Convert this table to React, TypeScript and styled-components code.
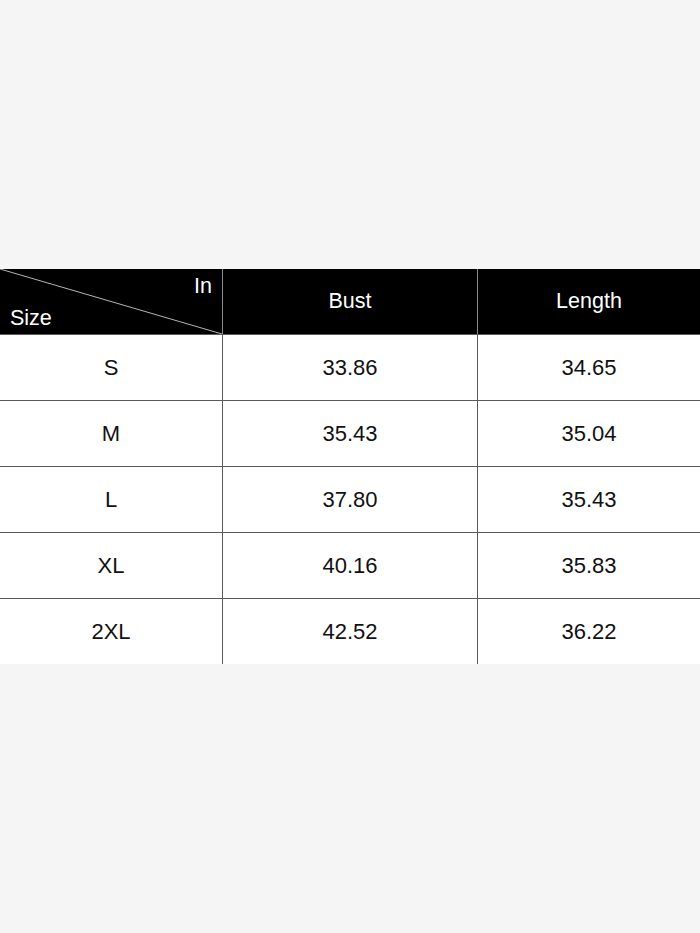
import { Fragment } from 'react';
import styled, { createGlobalStyle } from 'styled-components';

type Row = {
	size: string;
	bust: string;
	length: string;
};

const rows: Row[] = [
	{ size: 'S', bust: '33.86', length: '34.65' },
	{ size: 'M', bust: '35.43', length: '35.04' },
	{ size: 'L', bust: '37.80', length: '35.43' },
	{ size: 'XL', bust: '40.16', length: '35.83' },
	{ size: '2XL', bust: '42.52', length: '36.22' },
];

const GlobalStyle = createGlobalStyle`
	html, body {
		margin: 0;
		padding: 0;
		background: #f5f5f5;
	}
	body {
		font-family: 'Liberation Sans', Arial, sans-serif;
	}
`;

const Page = styled.main`
	width: 700px;
	height: 933px;
	padding-top: 269px;
	box-sizing: border-box;
	background: #f5f5f5;
`;

const Table = styled.div`
	display: grid;
	grid-template-columns: 223px 255px 222px;
	background: #fff;
`;

const HeadCell = styled.div<{ $last?: boolean }>`
	height: 65px;
	background: #000;
	color: #fff;
	font-size: 21.5px;
	display: flex;
	align-items: center;
	justify-content: center;
	border-right: ${(p) => (p.$last ? 'none' : '1px solid #8a8a8a')};
	box-sizing: border-box;
`;

const CornerCell = styled(HeadCell)`
	position: relative;
	flex-direction: column;
	align-items: stretch;
	justify-content: space-between;
	padding: 5px 10px 4px 10px;
`;

const Diagonal = styled.svg`
	position: absolute;
	inset: 0;
	width: 100%;
	height: 100%;
`;

const CornerTop = styled.span`
	align-self: flex-end;
	line-height: 24px;
`;

const CornerBottom = styled.span`
	align-self: flex-start;
	line-height: 24px;
`;

const Cell = styled.div<{ $last?: boolean; $first?: boolean }>`
	height: ${(p) => (p.$first ? '66px' : '66px')};
	border-top: 1px solid #5a5a5a;
	border-right: ${(p) => (p.$last ? 'none' : '1px solid #5a5a5a')};
	box-sizing: border-box;
	display: flex;
	align-items: center;
	justify-content: center;
	font-size: 22px;
	color: #111;
`;

const SizeChart = () => {
	return (
		<Table>
			<CornerCell>
				<Diagonal viewBox="0 0 222 65" preserveAspectRatio="none">
					<line x1="0" y1="0" x2="222" y2="65" stroke="#b5b5b5" strokeWidth="1" />
				</Diagonal>
				<CornerTop>In</CornerTop>
				<CornerBottom>Size</CornerBottom>
			</CornerCell>
			<HeadCell>Bust</HeadCell>
			<HeadCell $last>Length</HeadCell>
			{rows.map((row) => (
				<Fragment key={row.size}>
					<Cell>{row.size}</Cell>
					<Cell>{row.bust}</Cell>
					<Cell $last>{row.length}</Cell>
				</Fragment>
			))}
		</Table>
	);
};

const App = () => {
	return (
		<>
			<GlobalStyle />
			<Page>
				<SizeChart />
			</Page>
		</>
	);
};

export default App;
